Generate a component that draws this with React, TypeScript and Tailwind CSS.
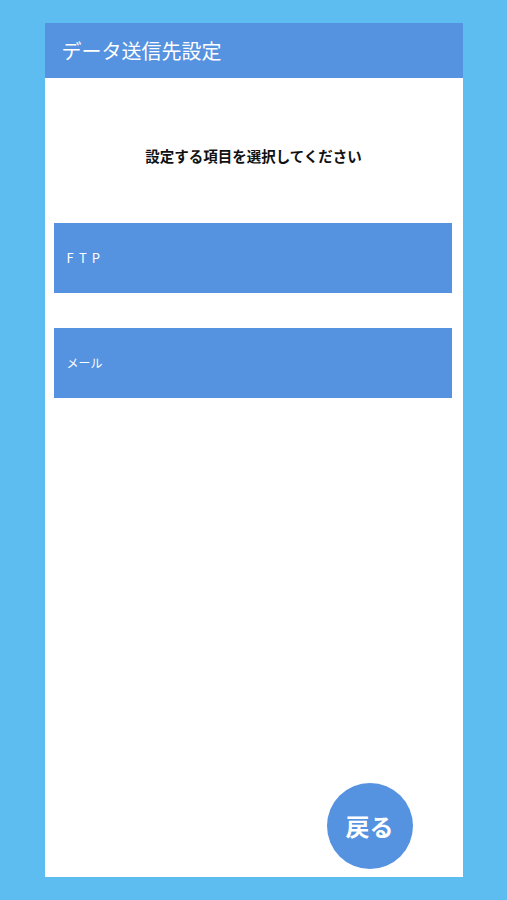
const font = { fontFamily: '"Noto Sans CJK JP", "Noto Sans", sans-serif' };

const MenuButton = (props: { label: string; wide?: boolean }) => {
  return (
    <button
      className="mx-[9px] flex h-[70px] w-[398px] items-center bg-[#5592e0] pl-[13px] text-left text-[12px] text-white"
      style={font}
    >
      <span className={props.wide ? 'text-[13px] tracking-[0.4em]' : ''}>{props.label}</span>
    </button>
  );
};

const App = () => {
  return (
    <div className="flex h-[900px] w-full justify-center bg-[#5ebdf0] pt-[23px]" style={font}>
      <div className="relative flex h-[854px] w-[418px] flex-col bg-white">
        <div className="flex h-[55px] items-center bg-[#5592e0] pl-[17px] text-[20px] text-white">
          データ送信先設定
        </div>
        <div className="mt-[67px] text-center text-[14.5px] font-bold text-[#111]">
          設定する項目を選択してください
        </div>
        <div className="mt-[56px] flex flex-col gap-[35px]">
          <MenuButton label="FTP" wide />
          <MenuButton label="メール" />
        </div>
        <button className="absolute bottom-[8px] right-[50px] flex h-[86px] w-[86px] items-center justify-center rounded-full bg-[#5592e0] text-[24px] font-bold text-white">
          戻る
        </button>
      </div>
    </div>
  );
};

export default App;
